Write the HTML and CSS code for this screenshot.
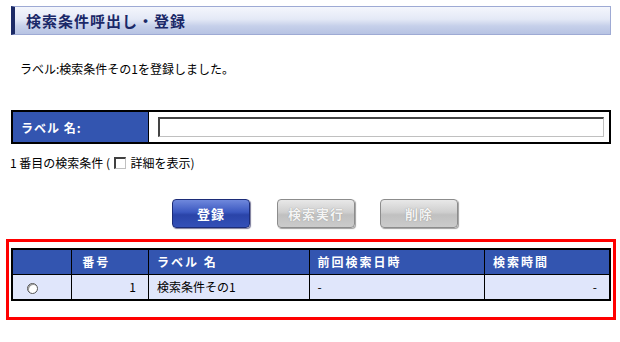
FILE: index.html
```html
<!DOCTYPE html>
<html lang="ja">
<head>
<meta charset="utf-8">
<link rel="stylesheet" href="styles.css">
</head>
<body>
<div class="page">
  <div class="title"><span>検索条件呼出し・登録</span></div>
  <p class="msg">ラベル:検索条件その1を登録しました。</p>
  <div class="labelrow">
    <div class="labelcell">ラベル 名:</div>
    <div class="inputcell"><input class="textin" type="text"></div>
  </div>
  <p class="cond">1 番目の検索条件 ( <span class="chk"></span> 詳細を表示)</p>
  <div class="buttons">
    <button class="btn primary">登録</button>
    <button class="btn disabled">検索実行</button>
    <button class="btn disabled">削除</button>
  </div>
  <div class="redbox">
    <table class="list">
      <thead>
        <tr>
          <th class="c1"></th>
          <th class="c2">番号</th>
          <th class="c3">ラベル 名</th>
          <th class="c4">前回検索日時</th>
          <th class="c5">検索時間</th>
        </tr>
      </thead>
      <tbody>
        <tr>
          <td class="c1"><span class="radio"></span></td>
          <td class="c2 right">1</td>
          <td class="c3">検索条件その1</td>
          <td class="c4">-</td>
          <td class="c5 right">-</td>
        </tr>
      </tbody>
    </table>
  </div>
</div>
</body>
</html>
```

FILE: styles.css
```css
* { box-sizing: border-box; }
html, body { margin: 0; padding: 0; background: #fff; }
body {
  font-family: "Noto Sans CJK JP", "Liberation Sans", sans-serif;
  font-size: 12px;
  color: #000;
}
.page { padding: 6px 9px 0 11px; width: 620px; }
.title {
  height: 29px;
  width: 600px;
  border: 1px solid #9eaad4;
  border-left: 4px solid #1c2a66;
  background: linear-gradient(to bottom, #f4f6fc 0%, #e4e9f6 45%, #c6d0ea 70%, #b7c3e3 100%);
  display: flex;
  align-items: center;
  padding-left: 11px;
}
.title span {
  font-size: 15px;
  font-weight: bold;
  color: #1a2868;
  letter-spacing: 1px;
  line-height: 1;
}
.msg { margin: 26px 0 0 9px; line-height: 16px; height: 16px; }
.labelrow {
  margin-top: 33px;
  width: 600px;
  height: 34px;
  border: 2px solid #000;
  display: flex;
}
.labelcell {
  width: 136px;
  background: #3355b0;
  color: #fff;
  font-weight: bold;
  display: flex;
  align-items: center;
  padding-left: 8px;
  letter-spacing: 1px;
  border-right: 1px solid #000;
}
.inputcell { flex: 1; display: flex; align-items: center; padding: 0 5px 0 9px; }
.textin {
  width: 100%;
  height: 20px;
  border: 1px solid #c0c0c0;
  border-top: 2px solid #444;
  border-left: 2px solid #444;
  padding: 0;
  margin: 0;
}
.cond { margin: 11px 0 0 -1px; line-height: 16px; display: flex; align-items: center; white-space: pre; }
.chk {
  display: inline-block;
  width: 12px; height: 12px;
  border: 1px solid #c0c0c0;
  border-top: 2px solid #404040;
  border-left: 2px solid #404040;
  background: #fff;
  margin: 0 2px 0 1px;
}
.buttons {
  display: flex;
  margin-top: 28px;
  padding-left: 161px;
  gap: 27px;
}
.btn {
  width: 78px;
  height: 29px;
  border-radius: 4px;
  font-family: inherit;
  font-size: 13px;
  font-weight: bold;
  padding: 0;
  letter-spacing: 1px;
}
.btn.primary {
  background: linear-gradient(to bottom, #6f88dc 0%, #3b58c0 45%, #2a44a8 55%, #3450b8 100%);
  border: 1px solid #1c2c78;
  color: #fff;
  box-shadow: 1px 1px 1px #7a7a9a;
}
.btn.disabled {
  background: linear-gradient(to bottom, #e8e8e8 0%, #cfcfcf 45%, #c0c0c0 55%, #cbcbcb 100%);
  border: 1px solid #8c8c8c;
  color: #f4f4f4;
  text-shadow: 0 0 1px #888;
  box-shadow: 1px 1px 1px #a0a0a0;
}
.btn.disabled + .btn.disabled { margin-left: -2px; }
.redbox {
  margin: 11px 0 0 -5px;
  width: 610px;
  height: 81px;
  border: 3px solid #ff0000;
  padding: 6px 0 0 2px;
}
.list {
  border-collapse: collapse;
  width: 600px;
  border: 2px solid #000;
}
.list th, .list td {
  border: 1px solid #000;
  height: 26px;
  padding: 0 8px;
  text-align: left;
  white-space: nowrap;
}
.list th {
  background: #3355b0;
  color: #fff;
  font-weight: bold;
  letter-spacing: 2px;
  height: 25px;
}
.list td { background: #e0e6fb; }
.list .c2 { padding-left: 10px; }
.c1 { width: 60px; }
.c2 { width: 77px; }
.c3 { width: 161px; }
.c4 { width: 176px; }
.c5 { width: 126px; }
.right { text-align: right !important; }
.list td.right { padding-right: 12px; }
.radio {
  display: inline-block;
  width: 11px; height: 11px;
  border-radius: 50%;
  border: 1px solid #555;
  background: #fff;
  box-shadow: inset 1px 1px 0 #999;
  margin-left: 6px;
  vertical-align: middle;
}
```
